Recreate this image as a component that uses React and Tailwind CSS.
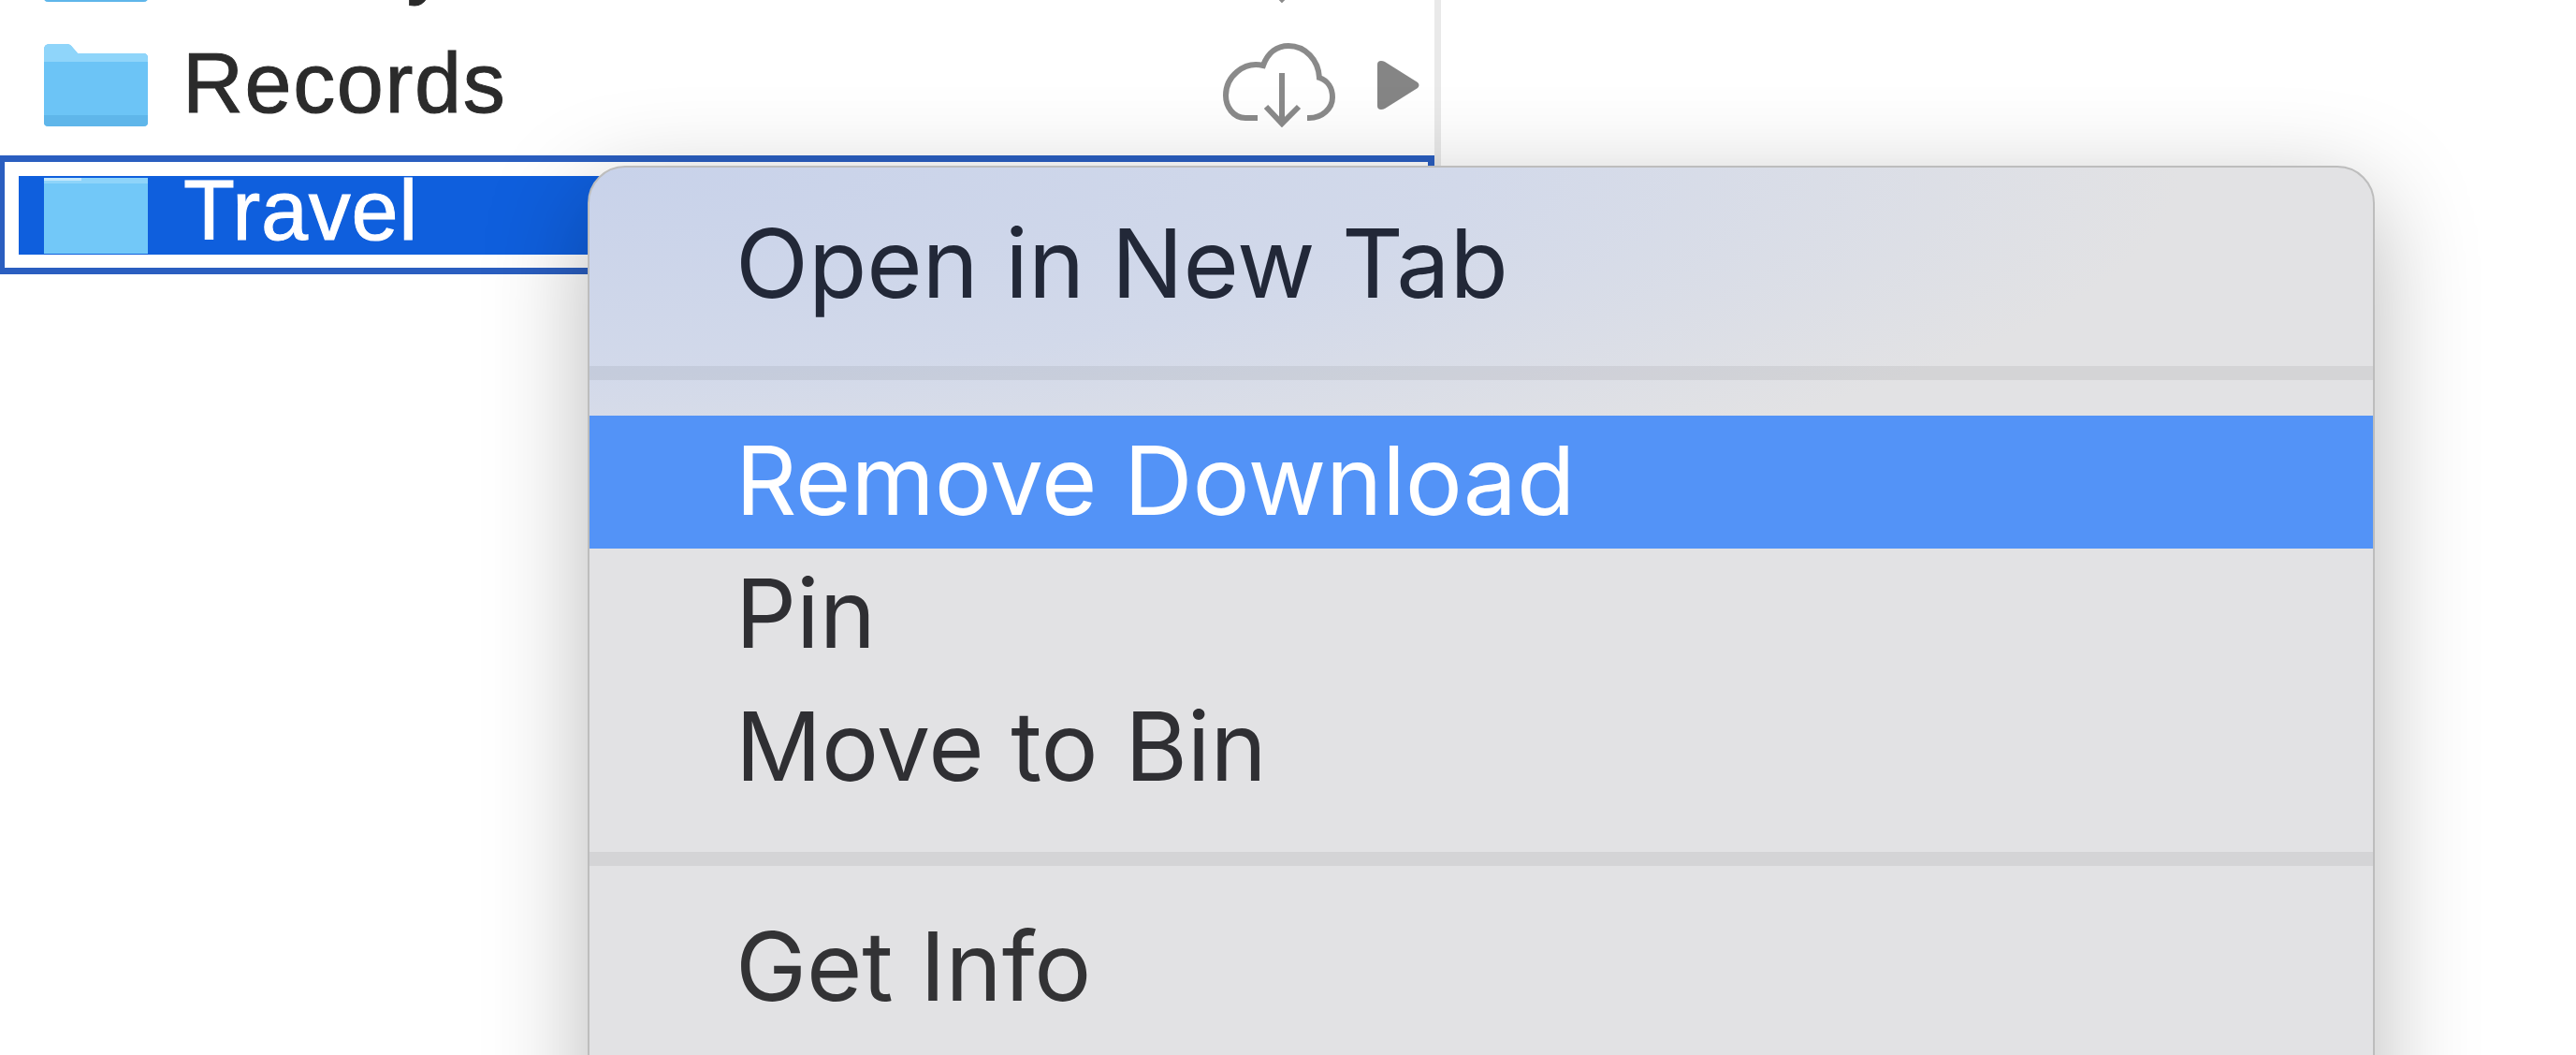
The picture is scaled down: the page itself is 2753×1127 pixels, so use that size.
const font = { list: "font-['Liberation_Sans',sans-serif]", menu: "font-['Inter',sans-serif]" }

const Folder = () => (
  <svg width="111" height="88" viewBox="0 0 111 88" className="shrink-0">
    <path d="M0 6 Q0 0 6 0 H24 Q28 0 30 3 L36 10 H106 Q111 10 111 15 V84 Q111 88 106 88 H5 Q0 88 0 84 Z" fill="#6cc4f6" />
    <path d="M0 6 Q0 0 6 0 H24 Q28 0 30 3 L36 10 H106 Q111 10 111 15 V19 H0 Z" fill="#8fd5fa" />
    <path d="M0 76 H111 V84 Q111 88 106 88 H5 Q0 88 0 84 Z" fill="#5fb6ea" />
  </svg>
)

const CutFolder = () => (
  <svg width="111" height="81" viewBox="0 0 111 81" className="shrink-0">
    <rect width="111" height="81" fill="#72c8f8" />
    <rect width="111" height="6" fill="#8ed4fa" />
    <rect width="40" height="3" fill="#c4e8fb" />
  </svg>
)

const Cloud = () => (
  <svg width="120" height="90" viewBox="0 0 120 90" fill="none" stroke="#8a8a8a" strokeWidth="6" className="shrink-0">
    <path d="M37 80 H24 C11 80 3 68 3 56 C3 36 22 19 43 24 C48 10 58 3 70 3 C88 3 102 18 103 37 C112 40 117 48 117 58 C117 70 106 80 92 80 H90" />
    <path d="M63 32 V86 M46 68 L63 86 L81 68" />
  </svg>
)

const Arrow = () => (
  <svg width="46" height="52" viewBox="0 0 46 52" className="shrink-0">
    <path d="M4 0 Q6 0 8 1 L43 23 Q46 26 43 29 L8 51 Q6 52 4 52 Q0 52 0 48 V4 Q0 0 4 0 Z" fill="#858585" />
  </svg>
)

const rows = [
  { name: "Library", height: "h-[127px]" },
  { name: "Records", height: "h-[139px]" },
]

const menuItem = "h-[142px] flex items-center pl-[156px] pb-[3px] text-[102px] font-[440] tracking-[-0.1px]"
const separator = "h-[15px] bg-black/[0.06] mb-[38px]"

const App = () => {
  return (
    <div className="relative h-screen w-full overflow-hidden bg-white">
      <div className={`w-[1540px] h-[1300px] -mt-[106px] border-r-[7px] border-[#e9e9e9] ${font.list}`}>
        {rows.map(({ name, height }) => (
          <div key={name} className={`${height} flex items-center pl-[47px] pr-[15px]`}>
            <Folder />
            <span className="ml-[37px] text-[90px] text-[#2b2b2b] tracking-[1.6px] -mt-[2px] [-webkit-text-stroke:1px_#2b2b2b]">{name}</span>
            <div className="ml-auto flex items-center gap-[45px]">
              <Cloud />
              <Arrow />
            </div>
          </div>
        ))}

        <div className="mt-[6px] w-[1533px] h-[127px] border-[7px] border-l-[5px] border-[#2a5ec0] bg-white pl-[15px] pt-[15px]">
          <div className="h-[84px] bg-[#0f5fdd] flex items-center pl-[27px]">
            <CutFolder />
            <span className="ml-[38px] text-[90px] leading-none text-white tracking-[0.7px] -mt-[10px] [-webkit-text-stroke:1px_#ffffff]">Travel</span>
          </div>
        </div>
      </div>

      {/* context menu */}
      <div className={`absolute left-[628px] top-[177px] w-[1910px] h-[1100px] rounded-[40px] border-2 border-[#bdbdbd] overflow-hidden bg-[#e2e2e4] bg-[radial-gradient(ellipse_1700px_400px_at_0_0,#c8d2ea_0%,#d2d9ea_55%,#e2e2e4_100%)] shadow-[0_30px_110px_rgba(0,0,0,0.28)] ${font.menu}`}>
        <div className="pt-[33px] mb-[37px] text-[#222838]">
          <div className={menuItem}>Open in New Tab</div>
        </div>
        <div className={separator}></div>
        <div className={`${menuItem} bg-[#5393f7] text-white`}>Remove Download</div>
        <div className={`${menuItem} text-[#2f2f33]`}>Pin</div>
        <div className={`${menuItem} text-[#2f2f33] mb-[40px]`}>Move to Bin</div>
        <div className={separator}></div>
        <div className={`${menuItem} text-[#333335]`}>Get Info</div>
      </div>
    </div>
  )
}

export default App
